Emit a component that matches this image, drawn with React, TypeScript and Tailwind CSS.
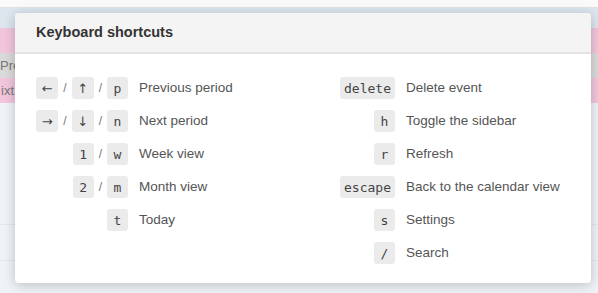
const left: { keys: string[]; label: string }[] = [
  { keys: ["←", "↑", "p"], label: "Previous period" },
  { keys: ["→", "↓", "n"], label: "Next period" },
  { keys: ["1", "w"], label: "Week view" },
  { keys: ["2", "m"], label: "Month view" },
  { keys: ["t"], label: "Today" },
];

const right: { keys: string[]; label: string }[] = [
  { keys: ["delete"], label: "Delete event" },
  { keys: ["h"], label: "Toggle the sidebar" },
  { keys: ["r"], label: "Refresh" },
  { keys: ["escape"], label: "Back to the calendar view" },
  { keys: ["s"], label: "Settings" },
  { keys: ["/"], label: "Search" },
];

const arrows = ["←", "↑", "→", "↓"];

function Kbd({ k }: { k: string }) {
  const isArrow = arrows.includes(k);
  return (
    <kbd
      className={
        isArrow
          ? "inline-flex h-[22px] min-w-[22px] items-center justify-center rounded-[3px] bg-[#ebebeb] px-1 font-['DejaVu_Sans',sans-serif] text-[13px] leading-none text-[#444]"
          : "inline-flex h-[22px] min-w-[21px] items-center justify-center rounded-[3px] bg-[#ebebeb] px-1 font-['DejaVu_Sans_Mono',monospace] text-[13px] leading-none text-[#444]"
      }
    >
      {k}
    </kbd>
  );
}

function Column({
  items,
  keyWidth,
}: {
  items: { keys: string[]; label: string }[];
  keyWidth: string;
}) {
  return (
    <div className={`grid ${keyWidth} content-start gap-x-[11px] gap-y-[11px]`}>
      {items.map((item) => (
        <div key={item.label} className="contents">
          <div className="flex h-[22px] items-center justify-end">
            {item.keys.map((k, i) => (
              <span key={k} className="flex items-center">
                {i > 0 && (
                  <span className="mx-[5px] text-[12px] text-[#777]">/</span>
                )}
                <Kbd k={k} />
              </span>
            ))}
          </div>
          <div className="flex h-[22px] items-center whitespace-nowrap text-[13.5px] text-[#555]">
            {item.label}
          </div>
        </div>
      ))}
    </div>
  );
}

export default function App() {
  return (
    <div className="relative h-[293px] w-[598px] overflow-hidden bg-[#eff3f7] font-['Liberation_Sans',Arial,sans-serif]">
      {/* page behind the dialog */}
      <div className="flex flex-col">
        <div className="h-[8px] border-b border-[#e2e2e2] bg-[#fafafa]" />
        <div className="h-[20px] bg-[#dde6ef]" />
        <div className="h-[25px] bg-[#f1c6dc]" />
        <div className="flex h-[25px] items-center bg-[#dadada] text-[13px] text-[#777]">
          <span>Pre.</span>
        </div>
        <div className="flex h-[25px] items-center bg-[#f1c6dc] text-[13px] text-[#777]">
          <span className="ml-[1px]">ixt</span>
        </div>
        <div className="h-[122px] border-b border-[#e3e6ea]" />
        <div className="h-[36px] border-b border-[#e3e6ea]" />
      </div>

      {/* dialog */}
      <div className="absolute left-[15px] top-[13px] h-[270px] w-[576px] overflow-hidden rounded-[4px] bg-white shadow-[0_2px_12px_rgba(0,0,0,0.22)]">
        <div className="flex h-[41px] items-center border-b-2 border-[#e4e4e4] bg-[#f4f4f4] pl-[21px]">
          <h2 className="text-[14.5px] font-bold text-[#333]">
            Keyboard shortcuts
          </h2>
        </div>
        <div className="grid grid-cols-[294px_1fr] pl-[21px] pt-[23px]">
          <Column items={left} keyWidth="grid-cols-[92px_1fr]" />
          <Column items={right} keyWidth="grid-cols-[65px_1fr]" />
        </div>
      </div>
    </div>
  );
}
